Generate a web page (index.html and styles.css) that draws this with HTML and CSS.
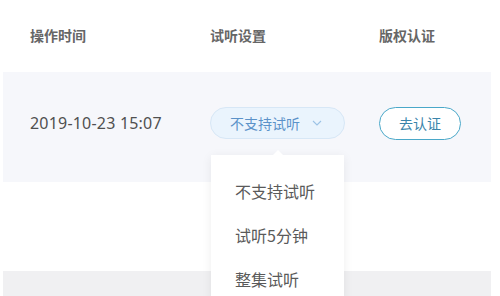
FILE: index.html
```html
<!DOCTYPE html>
<html lang="zh">
<head>
<meta charset="utf-8">
<link rel="stylesheet" href="styles.css">
</head>
<body>
<div class="table">
  <div class="row head">
    <div class="c1">操作时间</div>
    <div class="c2">试听设置</div>
    <div class="c3">版权认证</div>
  </div>
  <div class="row body">
    <div class="c1 date">2019-10-23 15:07</div>
    <div class="c2 cell-select">
      <div class="select">
        <span>不支持试听</span>
        <svg class="chev" width="10" height="6" viewBox="0 0 10 6"><path d="M1 1 L5 5 L9 1" fill="none" stroke="#9cc3e6" stroke-width="1.1"/></svg>
      </div>
      <div class="menu">
        <div class="arrow"></div>
        <div class="item">不支持试听</div>
        <div class="item">试听5分钟</div>
        <div class="item">整集试听</div>
      </div>
    </div>
    <div class="c3"><div class="btn">去认证</div></div>
  </div>
  <div class="spacer"></div>
  <div class="footer"></div>
</div>
</body>
</html>
```

FILE: styles.css
```css
html, body {
  margin: 0;
  padding: 0;
  background: #fff;
  font-family: "Noto Sans CJK SC", "Noto Sans", sans-serif;
}
.table {
  width: 488px;
  margin-left: 3px;
}
.row {
  display: flex;
  align-items: center;
  padding-left: 27px;
}
.c1 { width: 180px; }
.c2 { width: 169px; }
.c3 { flex: 1; }
.head {
  height: 72px;
  font-size: 14px;
  font-weight: 700;
  color: #666;
}
.head > div { margin-top: -2px; }
.body {
  height: 110px;
  background: #f6f7fb;
  position: relative;
}
.date {
  font-family: "Noto Sans", sans-serif;
  font-size: 16px;
  color: #505050;
  letter-spacing: 0.2px;
  margin-top: -8px;
}
.cell-select {
  position: relative;
  margin-top: -8px;
}
.select {
  box-sizing: border-box;
  width: 135px;
  height: 32px;
  border: 1px solid #d7e7f6;
  background: #eaf4fd;
  border-radius: 16px;
  display: flex;
  align-items: center;
  padding-left: 19px;
  font-size: 14px;
  color: #5b92c9;
}
.chev { margin-left: 12px; }
.btn {
  box-sizing: border-box;
  width: 82px;
  height: 33px;
  border: 1.5px solid #4aa8c9;
  border-radius: 17px;
  display: flex;
  align-items: center;
  justify-content: center;
  font-size: 14px;
  color: #3a84aa;
  margin-top: -8px;
  background: #fff;
}
.menu {
  position: absolute;
  left: 1px;
  top: 48px;
  width: 133px;
  background: #fff;
  box-shadow: 0 2px 10px rgba(0,0,0,0.07);
  z-index: 5;
  padding-top: 14px;
}
.arrow {
  position: absolute;
  top: -5px;
  left: 62px;
  width: 0;
  height: 0;
  border-left: 5px solid transparent;
  border-right: 5px solid transparent;
  border-bottom: 5px solid #fff;
}
.item {
  height: 44px;
  line-height: 44px;
  padding-left: 24px;
  font-size: 16px;
  color: #5a5a5a;
}
.spacer { height: 89px; }
.footer {
  height: 30px;
  background: #f0f0f2;
}
```
